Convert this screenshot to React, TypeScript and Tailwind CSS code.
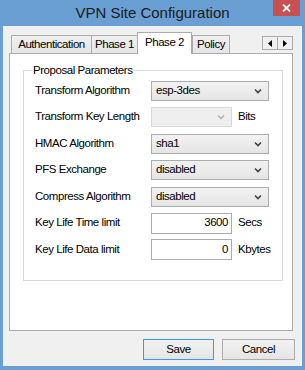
import React from 'react';

const font = { fontFamily: '"Liberation Sans", Arial, sans-serif' };
const txt = 'whitespace-nowrap text-[11.5px] tracking-[-0.45px] leading-none text-black';

function Chevron({ disabled }: { disabled?: boolean }) {
  return (
    <svg width="8" height="6" viewBox="0 0 8 6" className="shrink-0">
      <path d="M1 1.5 L4 4.5 L7 1.5" fill="none" stroke={disabled ? '#b5b5b5' : '#404040'} strokeWidth="1.6" />
    </svg>
  );
}

function Select({ value, wide = true, disabled }: { value?: string; wide?: boolean; disabled?: boolean }) {
  return (
    <div
      className={`flex h-[20px] items-center justify-between pl-[4px] pr-[6px] border ${
        wide ? 'w-[118px]' : 'w-[81px]'
      } ${disabled ? 'border-[#d9d9d9] bg-[#efefef]' : 'border-[#acacac] bg-gradient-to-b from-[#f2f2f2] to-[#e5e5e5]'}`}
    >
      <span className={txt}>{value}</span>
      <Chevron disabled={disabled} />
    </div>
  );
}

function NumInput({ value }: { value: string }) {
  return (
    <div className={`flex h-[21px] w-[81px] items-center justify-end border border-[#acacac] bg-white pr-[3px] ${txt}`}>
      {value}
    </div>
  );
}

function Row({ label, children, unit }: { label: string; children: React.ReactNode; unit?: string }) {
  return (
    <div className="flex h-[20px] items-center">
      <span className={`w-[116px] ${txt}`}>{label}</span>
      {children}
      {unit && <span className={`ml-[6px] ${txt}`}>{unit}</span>}
    </div>
  );
}

export default function App() {
  const tabs = [
    { name: 'Authentication', w: 'w-[81px]' },
    { name: 'Phase 1', w: 'w-[47px]' },
    { name: 'Phase 2', w: 'w-[55px]', active: true },
    { name: 'Policy', w: 'w-[38px]' },
  ];

  return (
    <div className="flex h-[370px] w-[305px] flex-col bg-[#6a9fd3]" style={font}>
      <div className="relative flex h-[26px] shrink-0 items-center justify-center">
        <span className="pt-[1px] text-[15px] text-[#1a1a1a]">VPN Site Configuration</span>
        <div className="absolute right-[5px] top-0 flex h-[16px] w-[27px] items-center justify-center bg-[#c75050]">
          <svg width="9" height="8" viewBox="0 0 9 8">
            <path d="M1 0.5 L8 7.5 M8 0.5 L1 7.5" stroke="#fff" strokeWidth="1.8" />
          </svg>
        </div>
      </div>

      <div className="mx-[3px] mb-[4px] flex flex-1 flex-col bg-[#f0f0f0] pl-[6px] pr-[7px] pt-[7px]">
        <div className="mr-[2px] flex h-[20px] items-end pl-[2px]">
          {tabs.map((t) =>
            t.active ? (
              <div
                key={t.name}
                className={`${t.w} relative z-10 -mb-[1px] flex h-[22px] items-center justify-center border border-b-0 border-[#acacac] bg-white pb-[2px] ${txt}`}
              >
                {t.name}
              </div>
            ) : (
              <div
                key={t.name}
                className={`${t.w} -mr-[1px] flex h-[18px] items-center justify-center border border-b-0 border-[#acacac] bg-gradient-to-b from-[#f0f0f0] to-[#e5e5e5] ${txt}`}
              >
                {t.name}
              </div>
            )
          )}
          <div className="mb-[3px] ml-auto flex self-start pt-[3px]">
            {['M5 1 L1 4.5 L5 8 Z', 'M1 1 L5 4.5 L1 8 Z'].map((d, i) => (
              <div key={i} className="-ml-[1px] flex h-[14px] w-[16px] items-center justify-center border border-[#acacac] bg-[#f0f0f0]">
                <svg width="6" height="9" viewBox="0 0 6 9">
                  <path d={d} fill="#000" />
                </svg>
              </div>
            ))}
          </div>
        </div>

        <div className="mr-[2px] h-[278px] border border-[#acacac] bg-white pt-[11px]">
          <fieldset className="ml-[13px] mr-[9px] border border-[#d9d9d9] px-[11px] pb-[20px] pt-[4px]">
            <legend className={`ml-[-3px] px-[1px] leading-[14px] ${txt}`}>Proposal Parameters</legend>
            <div className="flex flex-col gap-[6.5px]">
              <Row label="Transform Algorithm">
                <Select value="esp-3des" />
              </Row>
              <Row label="Transform Key Length" unit="Bits">
                <Select wide={false} disabled />
              </Row>
              <Row label="HMAC Algorithm">
                <Select value="sha1" />
              </Row>
              <Row label="PFS Exchange">
                <Select value="disabled" />
              </Row>
              <Row label="Compress Algorithm">
                <Select value="disabled" />
              </Row>
              <Row label="Key Life Time limit" unit="Secs">
                <NumInput value="3600" />
              </Row>
              <Row label="Key Life Data limit" unit="Kbytes">
                <NumInput value="0" />
              </Row>
            </div>
          </fieldset>
        </div>

        <div className="mt-[8px] flex justify-end gap-[8px]">
          <button className={`h-[21px] w-[71px] border border-[#3399ff] bg-gradient-to-b from-[#f2f2f2] to-[#e5e5e5] ${txt}`}>
            Save
          </button>
          <button className={`h-[21px] w-[73px] border border-[#acacac] bg-gradient-to-b from-[#f2f2f2] to-[#e5e5e5] ${txt}`}>
            Cancel
          </button>
        </div>
      </div>
    </div>
  );
}
